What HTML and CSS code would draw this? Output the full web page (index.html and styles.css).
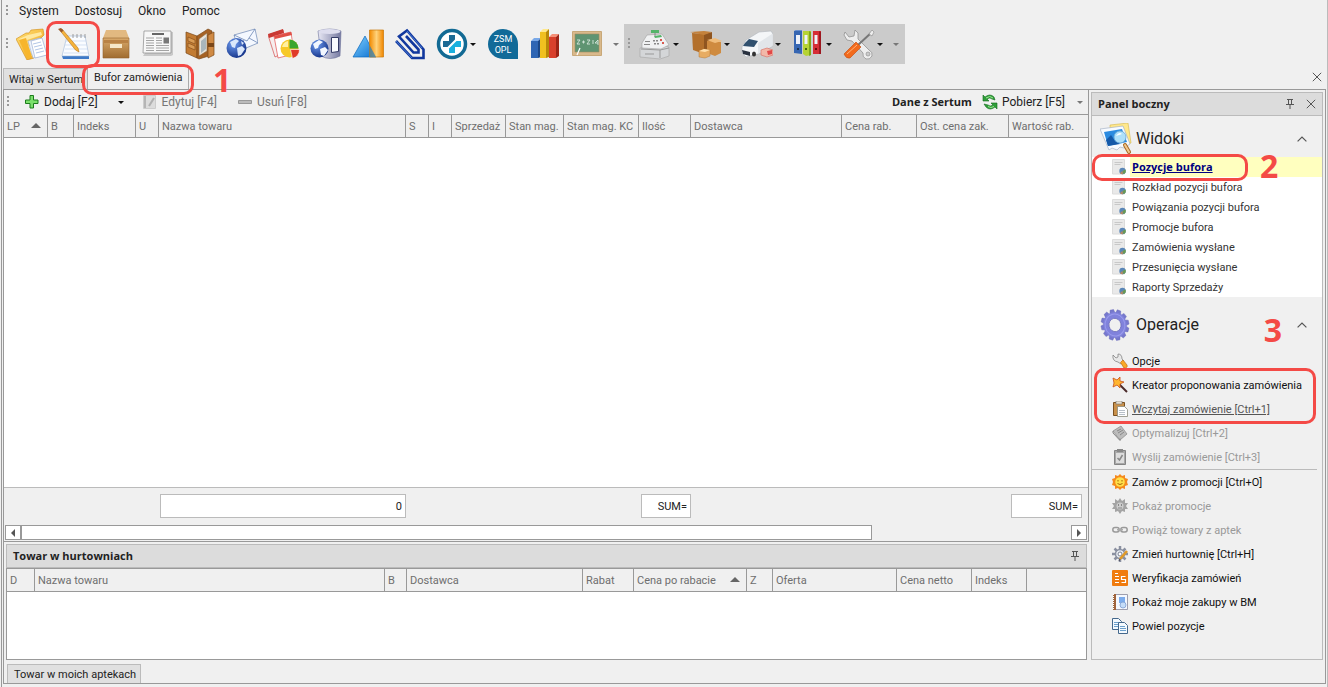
FILE: index.html
```html
<!DOCTYPE html>
<html lang="pl">
<head>
<meta charset="utf-8">
<title>Bufor zamówienia</title>
<link rel="stylesheet" href="styles.css">
</head>
<body>
<svg class="defs" aria-hidden="true">
  <defs>
    <linearGradient id="gYellow" x1="0" y1="0" x2="1" y2="1"><stop offset="0" stop-color="#ffe27a"/><stop offset="1" stop-color="#f0a012"/></linearGradient>
    <linearGradient id="gBox" x1="0" y1="0" x2="0" y2="1"><stop offset="0" stop-color="#d9aa6c"/><stop offset="1" stop-color="#a06c30"/></linearGradient>
    <linearGradient id="gBlue" x1="0" y1="0" x2="1" y2="1"><stop offset="0" stop-color="#7fd0ff"/><stop offset="1" stop-color="#0b6fd0"/></linearGradient>
    <linearGradient id="gOrange" x1="0" y1="0" x2="1" y2="0"><stop offset="0" stop-color="#f28a00"/><stop offset=".5" stop-color="#ffd27a"/><stop offset="1" stop-color="#f08600"/></linearGradient>
    <linearGradient id="gMetal" x1="0" y1="0" x2="1" y2="0"><stop offset="0" stop-color="#e8e8f4"/><stop offset="1" stop-color="#7478a0"/></linearGradient>
    <radialGradient id="gGlobe" cx=".35" cy=".3" r=".8"><stop offset="0" stop-color="#6f9cf0"/><stop offset="1" stop-color="#0c2a80"/></radialGradient>
    <symbol id="report" viewBox="0 0 16 16"><path fill="#e9e9e9" stroke="#dcdcdc" d="M.5 .5h12v14.500H.5z"/><path stroke="#c8c8c8" d="M2.500 3.500h8M2.500 5.500h6"/><circle cx="10.500" cy="12" r="3.200" fill="#5a86b8"/><path fill="#6a9a52" d="M10.500 12l3-1.500a3.200 3.200 0 0 1-2 4.500z"/><path fill="#b88a60" d="M10.500 12L8 14a3.200 3.200 0 0 0 3 1.200z"/></symbol>
    <symbol id="pin" viewBox="0 0 10 10"><path fill="none" stroke="#555" d="M2 .5h6M3.500 .5v4.500M6.500 .5v4.500M1 5.500h8M5 5.500v4.500"/></symbol>
    <symbol id="cross" viewBox="0 0 10 10"><path fill="none" stroke="#555" d="M.8 .8l8.400 8.400M9.200 .8L.8 9.200"/></symbol>
    <symbol id="chev" viewBox="0 0 10 6"><path fill="none" stroke="#555" stroke-width="1.200" d="M.6 5.400L5 1l4.400 4.400"/></symbol>
  </defs>
</svg>

<div class="window">
  <nav class="menubar" aria-label="Menu">
    <span class="grip"></span>
    <button>System</button><button>Dostosuj</button><button>Okno</button><button>Pomoc</button>
  </nav>

  <div class="toolbar" role="toolbar" aria-label="Moduły">
    <span class="grip"></span>
    <button class="tool" aria-label="Dokumenty"><svg viewBox="0 0 32 32"><path fill="url(#gYellow)" stroke="#d08a10" stroke-width=".6" d="M0 11L10 5l3 0 2-3 12-1 1 6-3 3-14 9 7 11-7 2z"/><path fill="#ffe9a0" d="M3 11l9-4 13-3 1 3-15 5 5 16-3 1z"/><path fill="#f7b52c" d="M3 12l7-2 6 19-5 1z"/><path fill="#eef3fb" stroke="#9fb3d6" stroke-width=".6" d="M12 13l12-3 6 17-13 3z"/><path fill="#fff" stroke="#8fa5cc" stroke-width=".6" d="M15 13l11-3 5 17-12 3z"/><path stroke="#9db8e0" stroke-width=".8" d="M17 16l8-2M18 19l8-2M19 22l8-2M20 25l8-2"/></svg></button>
    <button class="tool" aria-label="Bufor zamówienia"><svg viewBox="0 0 32 32"><path fill="#3d79c8" d="M4 28h27v3H5z"/><path fill="#fafcff" stroke="#9db6d6" stroke-width=".6" d="M9 8h18l4 20H4z"/><path stroke="#888" stroke-width=".8" d="M15 6v4M19 6v4M23 6v4M27 6v4"/><path stroke="#c4d6ee" stroke-width=".7" d="M8 13h20M7 17h22M7 21h23M6 25h24"/><path fill="#f6b43c" stroke="#b4731c" stroke-width=".6" d="M2 2.500L4 1 20 20l1 4-3.500-2z"/><path fill="#9b5a2a" d="M0 1l3-1 2.500 2.500-2 2z"/></svg><span class="callout callout-tool"></span></button>
    <button class="tool" aria-label="Magazyn"><svg viewBox="0 0 32 32"><path fill="#e2b981" d="M6 2h20l3 8H3z"/><path fill="url(#gBox)" stroke="#96632d" stroke-width=".6" d="M3 10h26v20H3z"/><path fill="#b98245" d="M4 12h24v3H4z"/><path fill="#f6e7c8" d="M10 16h12v4H10z"/></svg></button>
    <button class="tool" aria-label="Aktualności"><svg viewBox="0 0 32 32"><path fill="#c8c8c8" d="M3 4h28v23l-2 1H1l2-3z"/><path fill="#f7f7f7" stroke="#888" stroke-width=".7" d="M2 3h27v22H1z"/><path fill="#666" d="M10 5h12v2H10z"/><path fill="none" stroke="#999" stroke-width=".9" d="M4 10h8M4 12.500h8M4 15h8M4 17.500h8M4 20h8M4 22.500h8M14 10h6M14 12.500h6M14 15h6M14 17.500h13M14 20h13M14 22.500h13"/><path fill="#777" d="M21.500 9.500h5.500v6h-5.500z"/></svg></button>
    <button class="tool" aria-label="Portfel"><svg viewBox="0 0 32 32"><path fill="#c27b32" stroke="#7a4718" stroke-width=".7" d="M2 4l11 4v22L2 25z"/><path fill="#d99b54" stroke="#7a4718" stroke-width=".6" d="M4 9l7 3v4l-7-3zM4 15l7 3v4l-7-3z"/><path fill="#a66224" stroke="#7a4718" stroke-width=".7" d="M13 8L24 1l4 2v24l-13 4-2-1z"/><path fill="#e8e4dc" stroke="#8c6a40" stroke-width=".6" d="M15 11l8-6v18l-8 5z"/><path fill="#a9b6bc" d="M17 13l5-4v12l-5 4z"/><path fill="#d08a44" stroke="#7a4718" stroke-width=".7" d="M24 7l6-3v23l-6 3z"/><path fill="#7a4718" d="M24 15h6v4h-6z"/></svg></button>
    <button class="tool" aria-label="Poczta"><svg viewBox="0 0 32 32"><path fill="#f4f8ff" stroke="#6c86b4" stroke-width=".7" d="M8 7l21-6 3 14-19 8z"/><path fill="none" stroke="#6c86b4" stroke-width=".8" d="M8 7l13 6 8-12M13 23l5-11M32 15l-9-5"/><circle cx="10.500" cy="20" r="10" fill="url(#gGlobe)"/><path fill="#dbe8fb" d="M4 14l6-3 3 2-3 3-1 4-3-1zM11 20l5-2 3 3-4 6-3 1zM15 13l3 2-2 2z"/></svg></button>
    <button class="tool" aria-label="Raporty"><svg viewBox="0 0 32 32"><path fill="#f6eeee" stroke="#c33" stroke-width=".6" d="M0 7l15-5 4 21-12 6z"/><path fill="#c93a34" d="M0 6l15-5 1 4L1 10z"/><path fill="#fff" stroke="#d33" stroke-width=".6" d="M6 8l17-4 3 22-16 4z"/><path fill="#e05046" d="M6 8l17-4 1 3L7 11z"/><circle cx="21.500" cy="20.500" r="9" fill="#f7c928"/><path fill="#3aa62c" d="M21.500 20.500V11.500a9 9 0 0 1 9 9z"/><path fill="#e03a28" stroke="#fff" stroke-width=".6" d="M22.500 21.500h9a9 9 0 0 1-7 9z"/><path fill="#fff0a0" d="M14 19a8 8 0 0 1 6-6v6z"/></svg></button>
    <button class="tool" aria-label="Serwer"><svg viewBox="0 0 32 32"><path fill="url(#gMetal)" stroke="#6c7098" stroke-width=".6" d="M8 3q12-4 23 0l-1 25q-10 5-19 0z"/><ellipse cx="19.500" cy="3.500" rx="11" ry="2.500" fill="#dde"/><path fill="#f8faff" stroke="#333a66" d="M21.500 9.500h7v14l-7 1z"/><circle cx="9.500" cy="20.500" r="9" fill="url(#gGlobe)"/><path fill="#f2f7ff" d="M3 16l6-4 4 2-4 3-1 3-3 1zM10 21l5-2 3 3-4 6-3-1z"/></svg></button>
    <button class="tool" aria-label="Analizy"><svg viewBox="0 0 32 32"><path fill="url(#gBlue)" stroke="#0a69bd" stroke-width=".7" d="M13 8l11 21H1z"/><path fill="url(#gOrange)" stroke="#c97808" stroke-width=".7" d="M17.500 2h14v27h-14z"/><path fill="#3a7fae" opacity=".8" d="M17.500 17L24 29h-6.500z"/></svg></button>
    <button class="tool" aria-label="Załączniki"><svg viewBox="0 0 32 32"><path fill="none" stroke="#12389e" stroke-width="2.600" d="M2 13L18 30H29.500V21.500L13 2.500 5 8.500 19.500 24.500H24.500V21.500L12 8"/><path fill="none" stroke="#5e93e6" stroke-width=".7" d="M2 13L18 30M28 20L13 3"/></svg></button>
    <div class="split"><button class="tool" aria-label="Apteka"><svg viewBox="0 0 32 32"><circle cx="16" cy="16" r="13.500" fill="#fff" stroke="#126a94" stroke-width="3.500"/><path fill="#1c6a94" d="M13 7h6v4.500L11.500 19H7v-6h6z"/><path fill="#1ab0de" d="M20.500 13H25v6h-6v6h-6v-4.500z"/></svg></button><button class="drop" aria-label="Więcej"></button></div>
    <button class="tool" aria-label="ZSM OPL"><svg viewBox="0 0 32 32"><path fill="#116a98" d="M16 1a15 15 0 0 1 15 15v15H16a15 15 0 0 1 0-30z"/><text class="zsm" x="16" y="14">ZSM</text><text class="zsm" x="16" y="25">OPL</text></svg></button>
    <button class="tool" aria-label="Statystyki"><svg viewBox="0 0 32 32"><path fill="#2f66b4" d="M2 13h7v17H2z"/><path fill="#7aa9e8" d="M2 13l3-3h7l-3 3z"/><path fill="#1c4888" d="M9 13l3-3v19l-3 1z"/><path fill="#f0c020" d="M11 4h6v26h-6z"/><path fill="#ffe88a" d="M11 4l3-3h6l-3 3z"/><path fill="#b88908" d="M17 4l3-3v28l-3 1z"/><path fill="#d8402c" d="M20 9h7v21h-7z"/><path fill="#f49078" d="M20 9l3-3h7l-3 3z"/><path fill="#9c2416" d="M27 9l3-3v22l-3 2z"/></svg></button>
    <button class="tool" aria-label="Szkolenia"><svg viewBox="0 0 32 32"><path fill="#d9b98c" stroke="#c8a878" d="M1.500 3.500h29v24h-29z"/><path fill="#5f9472" stroke="#a08a60" stroke-width=".6" d="M4 6h24v18H4z"/><path fill="none" stroke="#d7e7dc" stroke-width=".9" d="M6 12h3l-3 4h3M11 14h3M12.500 12.500v3M16 12h3l-3 4h3M21 13h2M21 15h2M27 17v-5l-3 3h3"/><path stroke="#fff" stroke-width="1.200" d="M9 20l-3 7"/></svg></button>
    <button class="drop overflow" aria-label="Opcje paska"></button>
    <div class="shaded">
      <span class="grip"></span>
      <div class="split"><button class="tool" aria-label="Kasa"><svg viewBox="0 0 32 32"><path fill="#d4d6d8" stroke="#a4a4a4" stroke-width=".6" d="M1 20l20-3 9 2v9l-9 3-20-2z"/><path fill="#f0f1f2" stroke="#a0a0a0" stroke-width=".6" d="M3 15L8 7l15-1 7 11-8 4-19-1z"/><path fill="#54b46a" d="M12 2h8v3h-8zM15 8l7-1 1 2-7 1z"/><path stroke="#888" d="M16 5v3"/><path fill="#888" d="M14 12h2v1.500h-2zM17 12h2v1.500h-2zM15 15h2v1.500h-2zM18 15h2v1.500h-2zM6 13h5v1H6zM5 16h6v1H5z"/><path fill="#d85a50" d="M21 11h2v2h-2zM23 14h2v2h-2z"/><path fill="none" stroke="#999" d="M2 21l19 1 9-2M6 26h9M21 22v8"/></svg></button><button class="drop" aria-label="Więcej"></button></div>
      <div class="split"><button class="tool" aria-label="Dostawy"><svg viewBox="0 0 32 32"><path fill="#b3702c" d="M2 5l12 1v20L3 22z"/><path fill="#8f5520" d="M14 6l8-2v18l-8 4z"/><path fill="#c4823c" d="M0 4l14-1 8 1-8 3z"/><path fill="#cf8b40" d="M17 13h9l5 1v11l-6 3-8-3z"/><path fill="#f0bd7c" d="M17 12l8-2 7 3-7 2z"/><path fill="#e7ac62" stroke="#b87a34" stroke-width=".5" d="M9 23l5-2 6 1v6l-5 2-6-1z"/><path fill="#ffe0ac" d="M9 23l5-2 6 1-5 2z"/></svg></button><button class="drop" aria-label="Więcej"></button></div>
      <div class="split"><button class="tool" aria-label="Transport"><svg viewBox="0 0 32 32"><path fill="#f4f6f8" stroke="#b0b6bc" stroke-width=".6" d="M1 19l4-7L18 4l12-1 2 3v12L17 26 5 29l-4-4z"/><path fill="#e2e6ea" d="M17 15L31 6v12L17 26z"/><path fill="#30506e" d="M4 15l4-4 9 2-4 6-11-1z"/><path fill="#2a3240" d="M1 22l8 2v4l-7-2z"/><ellipse cx="13" cy="26" rx="2" ry="2.500" fill="#333"/><path fill="#f2b8a8" stroke="#d86a60" stroke-width=".6" d="M20 22l6-2 6 2v5l-6 2-6-2z"/><path fill="#e04848" d="M26 23l5-1v4l-4 1z"/></svg></button><button class="drop" aria-label="Więcej"></button></div>
      <div class="split"><button class="tool" aria-label="Dokumentacja"><svg viewBox="0 0 32 32"><path fill="#3666b2" d="M2 3h8v23l-8-1z"/><path fill="#6a90cc" d="M2 3l1.500-1H10v1z"/><path fill="#b6d334" d="M11 3h8v24l-5 1-3-2z"/><path fill="#7ea818" d="M17 3l2 1v23l-2 1z"/><path fill="#d62c36" d="M21 3h8v23h-8z"/><path fill="#9c1820" d="M27 3l2 1v22h-2z"/><path fill="#eef2fa" d="M4 7h4v9H4zM12.500 7h3v9h-3zM22.500 7h3v9h-3z"/><circle cx="6" cy="21" r="1" fill="#123"/><circle cx="14" cy="21" r="1" fill="#240"/><circle cx="24" cy="21" r="1" fill="#400"/></svg></button><button class="drop" aria-label="Więcej"></button></div>
      <div class="split"><button class="tool" aria-label="Narzędzia"><svg viewBox="0 0 32 32"><path fill="#eee" stroke="#888" stroke-width=".7" d="M2 4l4 5 5-1 1-6 3 3v6l11 11q4 2 3 6-2 4-6 3-4-2-3-6L9 13l-5-1-3-5z"/><circle cx="25" cy="26" r="2" fill="#cbcbcb" stroke="#888" stroke-width=".6"/><path stroke="#777" stroke-width="2" d="M15 17L28 5"/><path fill="#eee" stroke="#888" stroke-width=".6" d="M26 6l3-4 2 2-2 4z"/><path fill="#f26a1c" stroke="#c8541a" stroke-width=".7" d="M13 14l5 5L7 30q-4 1-6-4z"/><path stroke="#ffb27a" d="M4 26l10-9"/></svg></button><button class="drop" aria-label="Więcej"></button></div>
      <button class="drop overflow" aria-label="Opcje paska"></button>
    </div>
  </div>

  <div class="tabs" role="tablist">
    <button class="tab" role="tab">Witaj w Sertum</button>
    <button class="tab active" role="tab" aria-selected="true">Bufor zamówienia<span class="callout callout-tab"></span><span class="number number-one">1</span></button>
    <button class="tabs-close" aria-label="Zamknij"><svg viewBox="0 0 10 10"><use href="#cross"/></svg></button>
  </div>

  <main class="page">
    <section class="left">
      <div class="buffer">
        <div class="actions" role="toolbar" aria-label="Pozycje">
          <span class="grip"></span>
          <button class="action add"><svg viewBox="0 0 16 16"><path fill="#7be06c" stroke="#1d7c1c" d="M6 1.500h3.500V6h4.500v3.500H9.500v4.500H6V9.500H1.500V6H6z"/></svg>Dodaj [F2]</button>
          <button class="drop" aria-label="Więcej"></button>
          <button class="action edit" disabled><svg viewBox="0 0 16 16"><path fill="#dcdcdc" stroke="#ccc" d="M1.500 1.500h12v13h-12z"/><path fill="#b5b5b5" d="M2 2h2v12H2z"/><path stroke="#b0b0b0" stroke-width="2" d="M12 4L7 12"/></svg>Edytuj [F4]</button>
          <button class="action remove" disabled><svg viewBox="0 0 16 16"><path fill="#bbb" stroke="#999" d="M1.500 6.500h13v3h-13z"/></svg>Usuń [F8]</button>
          <strong class="source">Dane z Sertum</strong>
          <button class="action fetch"><svg viewBox="0 0 16 16"><path fill="#2f9e3a" stroke="#126a1c" stroke-width=".6" d="M1 7V1l2 2q5-4 9 0l1 3-3-1q-2-2-5 0l2 2zM15 9v6l-2-2q-5 4-9 0l-2-3 4 1q2 2 5 0l-2-2z"/><path stroke="#9ae88e" fill="none" d="M4 4q4-3 7 0M12 12.500q-3 2-6 0"/></svg>Pobierz [F5]</button>
          <button class="drop overflow" aria-label="Opcje paska"></button>
        </div>
        <div class="grid-area">
          <table class="grid">
            <colgroup><col class="w44"><col class="w26"><col class="w62"><col class="w23"><col><col class="w23"><col class="w23"><col class="w54"><col class="w58"><col class="w75"><col class="w52"><col class="w151"><col class="w75"><col class="w92"><col class="w79"></colgroup>
            <thead><tr><th class="sorted">LP</th><th>B</th><th>Indeks</th><th>U</th><th>Nazwa towaru</th><th>S</th><th>I</th><th>Sprzedaż</th><th>Stan mag.</th><th>Stan mag. KC</th><th>Ilość</th><th>Dostawca</th><th>Cena rab.</th><th>Ost. cena zak.</th><th>Wartość rab.</th></tr></thead>
          </table>
        </div>
        <div class="summary"><output class="total-name">0</output><output class="total-qty">SUM=</output><output class="total-value">SUM=</output></div>
        <div class="scrollbar"><button class="prev" aria-label="W lewo"></button><div class="track"><div class="thumb"></div></div><button class="next" aria-label="W prawo"></button></div>
      </div>
      <div class="stock">
        <h2 class="caption">Towar w hurtowniach<button aria-label="Przypnij"><svg viewBox="0 0 10 10"><use href="#pin"/></svg></button></h2>
        <div class="grid-area">
          <table class="grid">
            <colgroup><col class="w28"><col><col class="w22"><col class="w176"><col class="w51"><col class="w113"><col class="w26"><col class="w124"><col class="w75"><col class="w55"><col class="w59"></colgroup>
            <thead><tr><th>D</th><th>Nazwa towaru</th><th>B</th><th>Dostawca</th><th>Rabat</th><th class="sorted">Cena po rabacie</th><th>Z</th><th>Oferta</th><th>Cena netto</th><th>Indeks</th><th></th></tr></thead>
          </table>
        </div>
      </div>
      <div class="dock"><button>Towar w moich aptekach</button></div>
    </section>

    <aside class="side">
      <h2 class="caption">Panel boczny<span class="caption-tools"><button aria-label="Przypnij"><svg viewBox="0 0 10 10"><use href="#pin"/></svg></button><button aria-label="Zamknij"><svg viewBox="0 0 10 10"><use href="#cross"/></svg></button></span></h2>
      <h3 class="group views-head"><svg class="group-icon" viewBox="0 0 32 32"><path fill="#ffe88c" stroke="#d4b648" stroke-width=".6" d="M10 2L28 0l3 20-20 4z"/><path fill="#f8fbff" stroke="#9aaac0" stroke-width=".6" d="M0 6l23-3 7 18-6 4-4-1-3 3-5-2-3 2z"/><path fill="#2c8be0" d="M4 9l18-3 5 13-19 4z"/><path fill="#1559a8" d="M6 17l5-5 4 6 5 3-12 2z"/><circle cx="20" cy="14" r="6" fill="#aee0fa" stroke="#6aa8d4" stroke-width=".8"/><path fill="#fff" d="M16 13q3-5 6-2l-3 1z"/><path stroke="#a86820" stroke-width="4" stroke-linecap="round" d="M25 22l4 7"/><path stroke="#f2c890" stroke-width="2" stroke-linecap="round" d="M25 22l4 7"/></svg>Widoki<button class="fold" aria-label="Zwiń"><svg viewBox="0 0 10 6"><use href="#chev"/></svg></button></h3>
      <ul class="views">
        <li class="current"><a href="#"><svg viewBox="0 0 16 16"><use href="#report"/></svg><span>Pozycje bufora</span></a><span class="callout callout-view"></span><span class="number number-two">2</span></li>
        <li><a href="#"><svg viewBox="0 0 16 16"><use href="#report"/></svg><span>Rozkład pozycji bufora</span></a></li>
        <li><a href="#"><svg viewBox="0 0 16 16"><use href="#report"/></svg><span>Powiązania pozycji bufora</span></a></li>
        <li><a href="#"><svg viewBox="0 0 16 16"><use href="#report"/></svg><span>Promocje bufora</span></a></li>
        <li><a href="#"><svg viewBox="0 0 16 16"><use href="#report"/></svg><span>Zamówienia wysłane</span></a></li>
        <li><a href="#"><svg viewBox="0 0 16 16"><use href="#report"/></svg><span>Przesunięcia wysłane</span></a></li>
        <li><a href="#"><svg viewBox="0 0 16 16"><use href="#report"/></svg><span>Raporty Sprzedaży</span></a></li>
      </ul>
      <h3 class="group ops-head"><svg class="group-icon" viewBox="0 0 32 32"><g transform="translate(15 16) rotate(-12) scale(.9 1)"><g fill="#7678cc" stroke="#6668b8" stroke-width=".4"><path id="tooth" d="M-2-15.500h4l1 4h-6z"/><use href="#tooth" transform="rotate(30)"/><use href="#tooth" transform="rotate(60)"/><use href="#tooth" transform="rotate(90)"/><use href="#tooth" transform="rotate(120)"/><use href="#tooth" transform="rotate(150)"/><use href="#tooth" transform="rotate(180)"/><use href="#tooth" transform="rotate(210)"/><use href="#tooth" transform="rotate(240)"/><use href="#tooth" transform="rotate(270)"/><use href="#tooth" transform="rotate(300)"/><use href="#tooth" transform="rotate(330)"/></g><circle r="9.800" fill="none" stroke="#8082dc" stroke-width="6"/><circle r="11" fill="none" stroke="#9a9cec"/><circle r="6.700" fill="none" stroke="#6668b8" stroke-width=".8"/></g></svg>Operacje<button class="fold" aria-label="Zwiń"><svg viewBox="0 0 10 6"><use href="#chev"/></svg></button><span class="number number-three">3</span></h3>
      <ul class="ops">
        <li><a href="#"><svg viewBox="0 0 16 16"><path fill="#e8e8e8" stroke="#777" stroke-width=".7" d="M1 2l3 3 2-1 0-3q4 0 4 5l2 2-3 3-3-2Q0 8 1 2z"/><path fill="#f9a825" stroke="#c46c10" stroke-width=".7" d="M8.500 9.500L11 7l4 5q1 3-3 3z"/></svg><span>Opcje</span></a></li>
        <li class="marked"><a href="#"><svg viewBox="0 0 16 16"><path stroke="#4a2a2a" stroke-width="2" d="M6 6l9 9"/><path fill="#ffb52e" stroke="#c8501c" stroke-width=".8" d="M1 1l4 2 3-3 0 4 4 1-4 2 0 4-3-3-4 2 1-4z"/></svg><span>Kreator proponowania zamówienia</span></a><span class="callout callout-ops"></span></li>
        <li class="hover"><a href="#"><svg viewBox="0 0 16 16"><path fill="#c8904a" stroke="#7a5020" d="M1.500 1.500h11v13h-11z"/><path fill="#e8e0d0" stroke="#777" stroke-width=".6" d="M4 0h6v3H4z"/><path fill="#fff" stroke="#8a8a7a" stroke-width=".8" d="M5.500 5.500h7l3 3v7h-10z"/><path stroke="#b8c0c8" d="M7 9.500h6M7 11.500h6M7 13.500h6"/></svg><span>Wczytaj zamówienie [Ctrl+1]</span></a></li>
        <li class="off"><a aria-disabled="true"><svg viewBox="0 0 16 16"><path fill="#bcbcbc" stroke="#888" stroke-width=".7" d="M1 6l8-5 6 8-7 6z"/><path stroke="#888" d="M5 6l4-2M6 8l5-3M8 10l4-3"/><path fill="none" stroke="#888" d="M1 6v2l7 7.500v-2"/></svg><span>Optymalizuj [Ctrl+2]</span></a></li>
        <li class="off"><a aria-disabled="true"><svg viewBox="0 0 16 16"><path fill="#a8a8a8" stroke="#858585" d="M2.500 1.500h11v14h-11z"/><path fill="#ddd" d="M4 4h8v10H4z"/><path fill="#888" d="M5 0h6v3H5z"/><path fill="none" stroke="#888" stroke-width="1.500" d="M5.500 9l2 2 3-5"/></svg><span>Wyślij zamówienie [Ctrl+3]</span></a></li>
        <li class="ruled"><a href="#"><svg viewBox="0 0 16 16"><path fill="#f58a1c" d="M8 0l2 2 3-1 0 3 3 1-1 3 1 3-3 1 0 3-3-1-2 2-2-2-3 1 0-3-3-1 1-3-1-3 3-1 0-3 3 1z"/><circle cx="8" cy="8" r="4.800" fill="#ffe04a"/><path fill="none" stroke="#a86408" d="M6 6v1.500M10 6v1.500M5.500 9.500q2.500 2 5 0"/></svg><span>Zamów z promocji [Ctrl+O]</span></a></li>
        <li class="off"><a aria-disabled="true"><svg viewBox="0 0 16 16"><path fill="#a4a4a4" d="M8 0l2 3 3-2 0 4 3 0-2 3 2 3-3 0 0 3-3-1-2 3-2-3-3 1 0-3-3 0 2-3-2-3 3 0 0-4 3 2z"/><circle cx="8" cy="8" r="3.500" fill="#ccc"/><path stroke="#888" d="M6.500 6v2M9.500 6v2M6 10h4"/></svg><span>Pokaż promocje</span></a></li>
        <li class="off"><a aria-disabled="true"><svg viewBox="0 0 16 16"><rect x=".8" y="5.500" width="6.400" height="4.500" rx="2.200" fill="none" stroke="#999" stroke-width="1.500"/><rect x="8.800" y="5.500" width="6.400" height="4.500" rx="2.200" fill="none" stroke="#999" stroke-width="1.500"/><path stroke="#aaa" stroke-width="1.500" d="M5 7.700h6"/></svg><span>Powiąż towary z aptek</span></a></li>
        <li><a href="#"><svg viewBox="0 0 16 16"><g transform="translate(8 8)"><path stroke="#8a90a0" stroke-width="2.500" d="M0-8V8M-8 0H8M-5.500-5.500l11 11M5.500-5.500l-11 11"/><circle r="4.500" fill="#e8ecf2" stroke="#8a90a0" stroke-width="1.500"/><circle r="2" fill="#fff" stroke="#7a8090"/></g><path stroke="#e09a28" stroke-width="2.500" d="M15 5L8 13"/><path stroke="#445" d="M8 13l-1 2"/></svg><span>Zmień hurtownię [Ctrl+H]</span></a></li>
        <li><a href="#"><svg viewBox="0 0 16 16"><rect width="16" height="16" rx="1" fill="#f07c10"/><path fill="none" stroke="#fff" stroke-width="1.200" d="M3 3.500h3M3 6.500h4M3 9.500h4M3 12.500h4M13.500 6.500h-4v3h4v3h-4"/></svg><span>Weryfikacja zamówień</span></a></li>
        <li><a href="#"><svg viewBox="0 0 16 16"><path fill="#f4f8ff" stroke="#889" stroke-width=".8" d="M3.500 .5h12v15h-12z"/><path fill="#a0643c" d="M1 0h3v16H1z"/><path stroke="#fff" stroke-dasharray="1 1" d="M1.500 0v16"/><path fill="#7cacec" d="M7 3h6v6H7z"/><circle cx="11" cy="11" r="3" fill="#c4dcf8" stroke="#7c9cd0" stroke-width=".8"/></svg><span>Pokaż moje zakupy w BM</span></a></li>
        <li><a href="#"><svg viewBox="0 0 16 16"><path fill="#f4faff" stroke="#44688c" d="M.5 .5h6l3 3v8h-9z"/><path stroke="#6ca0cc" d="M2 4.500h5M2 6.500h5M2 8.500h4"/><path fill="#f4faff" stroke="#44688c" d="M6.500 4.500h6l3 3v8h-9z"/><path stroke="#6ca0cc" d="M8 8.500h5M8 10.500h6M8 12.500h6"/></svg><span>Powiel pozycje</span></a></li>
      </ul>
    </aside>
  </main>
</div>
</body>
</html>
```

FILE: styles.css
```css
* { box-sizing: border-box; }
body { margin: 0; background: #f0f0f0; color: #222; font: 11px/16px Roboto, "Noto Sans", sans-serif; }
button { margin: 0; padding: 0; border: 0; background: none; color: inherit; font: inherit; }
h2, h3, ul { margin: 0; padding: 0; font-weight: normal; list-style: none; }
svg { display: block; flex: none; }
.defs { position: absolute; width: 0; height: 0; }

.window { display: flex; flex-direction: column; min-height: 100vh; margin: 0 0 0 1px; padding: 0 1px 3px; border-left: 1px solid #999; border-right: 1px solid #bbb; }

.grip { flex: none; width: 2px; height: 12px; background: repeating-linear-gradient(#999 0 2px, transparent 2px 4px); }
.drop { flex: none; width: 10px; height: 24px; display: flex; align-items: center; justify-content: center; }
.drop::before { content: ""; border: 3px solid transparent; border-top-color: #111; border-bottom: 0; }
.drop.overflow::before { border-top-color: #777; }

.menubar { display: flex; align-items: center; height: 22px; padding-left: 3px; font-size: 12px; }
.menubar .grip { margin-right: 3px; }
.menubar button { padding: 0 8px; }

.toolbar { display: flex; align-items: center; height: 44px; padding-left: 3px; }
.toolbar > .grip { margin-right: 3px; }
.tool { position: relative; flex: none; display: grid; place-items: center; width: 42px; height: 40px; }
.tool svg { width: 32px; height: 32px; }
.split { flex: none; display: flex; align-items: center; width: 51px; }
.split .tool { width: 37px; padding-left: 5px; }
.toolbar > .overflow { margin: 0 3px; }
.shaded { display: flex; align-items: center; height: 40px; padding: 0 4px; background: #cbcbcb; }
.shaded .grip { margin-right: 4px; }
.shaded > .overflow { margin-left: 2px; }
.zsm { font: 9px Roboto, sans-serif; fill: #fff; text-anchor: middle; }

.tabs { display: flex; align-items: flex-end; height: 23px; }
.tab { position: relative; height: 21px; padding: 2px 4px 0 5px; border: 1px solid #bbb; border-bottom: 0; background: #e0e0e0; }
.tab.active { height: 23px; margin-left: -1px; padding: 0 6px; border-color: #aaa; background: #f0f0f0; }
.tabs-close { width: 10px; height: 10px; margin: 0 4px 7px auto; }

.callout { position: absolute; z-index: 2; border: 3px solid #f44a46; border-radius: 10px; pointer-events: none; }
.callout-tool { inset: -3px -5px -4px -7px; }
.callout-tab { inset: -3px -6px -6px -6px; }
.callout-view { inset: -3px auto -4px 0; width: 156px; }
.callout-ops { top: -5px; left: 2px; right: 6px; height: 56px; }
.number { position: absolute; z-index: 2; color: #f44a46; font: bold 32px/32px "Open Sans", "Noto Sans", sans-serif; pointer-events: none; }
.number-one { top: -3px; left: 125px; }
.number-two { top: -7px; left: 168px; }
.number-three { top: 17px; right: 40px; }

.page { flex: 1; display: grid; grid-template-columns: minmax(0, 1fr) 232px; gap: 2px; padding-right: 2px; border: 1px solid #999; }
.left { display: flex; flex-direction: column; }
.buffer { flex: 1; display: flex; flex-direction: column; border-right: 1px solid #999; border-bottom: 1px solid #999; }

.actions { display: flex; align-items: center; height: 24px; padding: 0 3px; font-size: 12px; }
.actions .grip { margin-right: 15px; }
.action { display: flex; align-items: center; gap: 4px; }
.action svg { width: 16px; height: 16px; }
.action:disabled { color: #777; }
.action.add + .drop { margin: 0 16px 0 18px; }
.action.remove { margin-left: 20px; }
.source { margin: 0 10px 0 auto; font-family: "Open Sans", "Noto Sans", sans-serif; font-size: 11px; }
.fetch + .drop { margin-left: 10px; }

.grid-area { flex: 1; background: #fff; border-bottom: 1px solid #bbb; }
.grid { width: 100%; table-layout: fixed; border-collapse: separate; border-spacing: 0; }
.grid th { height: 24px; padding: 2px 0 0 3px; border: solid #999; border-width: 1px 1px 1px 0; background: #f0f0f0; color: #6e6e6e; font-weight: normal; text-align: left; white-space: nowrap; overflow: hidden; }
.grid th:last-child { border-right: 0; }
.sorted::after { content: ""; float: right; margin: 4px 6px 0 0; border: 5px solid transparent; border-bottom-color: #666; border-top: 0; }
.w22 { width: 22px; } .w23 { width: 23px; } .w26 { width: 26px; } .w28 { width: 28px; }
.w44 { width: 44px; } .w51 { width: 51px; } .w52 { width: 52px; } .w54 { width: 54px; }
.w55 { width: 55px; } .w58 { width: 58px; } .w59 { width: 59px; } .w62 { width: 62px; }
.w75 { width: 75px; } .w79 { width: 79px; } .w92 { width: 92px; } .w113 { width: 113px; }
.w124 { width: 124px; } .w151 { width: 151px; } .w176 { width: 176px; }

.summary { display: grid; grid-template-columns: 156px minmax(0, 1fr) 235px 50px 320px 71px; padding: 6px 6px 7px 0; }
.summary output { height: 24px; padding: 4px 3px 2px; border: 1px solid #bbb; background: #fff; text-align: right; }
.total-name { grid-column: 2; }
.total-qty { grid-column: 4; }
.total-value { grid-column: 6; }

.scrollbar { display: flex; height: 15px; margin: 0 1px 1px; }
.scrollbar button { display: grid; place-items: center; width: 16px; border: 1px solid #999; background: #fff; }
.scrollbar button::before { content: ""; border: 4px solid transparent; }
.scrollbar .prev::before { border-right-color: #555; border-left-width: 0; }
.scrollbar .next::before { border-left-color: #555; border-right-width: 0; }
.track { flex: 1; display: flex; }
.thumb { width: 81%; border: 1px solid #999; background: #fff; }

.stock { display: flex; flex-direction: column; height: 116px; margin: 2px 2px 0 2px; }
.caption { display: flex; align-items: center; justify-content: space-between; height: 24px; padding: 0 6px; border: 1px solid #bbb; background: #dcdcdc; font: bold 11px/16px "Open Sans", "Noto Sans", sans-serif; }
.caption svg, .tabs-close svg { width: 10px; height: 10px; }
.caption-tools { display: flex; gap: 11px; }
.stock .grid-area { border: 1px solid #999; border-top: 0; }
.dock { display: flex; align-items: flex-end; height: 23px; padding-left: 3px; }
.dock button { height: 19px; padding: 2px 4px 0 6px; border: 1px solid #bbb; border-bottom: 0; background: #e0e0e0; }

.side { align-self: start; min-height: 568px; margin-top: 2px; border: 1px solid #bbb; }
.side .caption { height: 23px; border-width: 0 0 1px; }
.group { position: relative; display: flex; align-items: center; gap: 4px; padding: 4px 15px 0 8px; font-size: 16px; line-height: 24px; }
.views-head { height: 41px; }
.ops-head { height: 52px; }
.group-icon { width: 32px; height: 32px; }
.fold { margin-left: auto; }
.fold svg { width: 10px; height: 6px; }
.views { background: #fff; }
.side li { position: relative; }
.side a { display: flex; align-items: center; gap: 4px; height: 20px; padding-left: 20px; color: #333; text-decoration: none; white-space: nowrap; }
.side a svg { width: 16px; height: 16px; }
.side a span { padding-top: 2px; }
.current { background: linear-gradient(to right, #fff 38px, #ffffbf 38px); }
.side .current a { color: #000080; font-family: "Open Sans", "Noto Sans", sans-serif; font-weight: bold; }
.side .current a span { padding-top: 0; text-decoration: underline; }
.side .ops a { height: 24px; color: #111; }
.side .ops .hover a { color: #555; }
.hover a span { text-decoration: underline; }
.side .ops .off a { color: #999; }
.ruled::before { content: ""; display: block; height: 1px; margin-right: 5px; background: #bbb; }
```
